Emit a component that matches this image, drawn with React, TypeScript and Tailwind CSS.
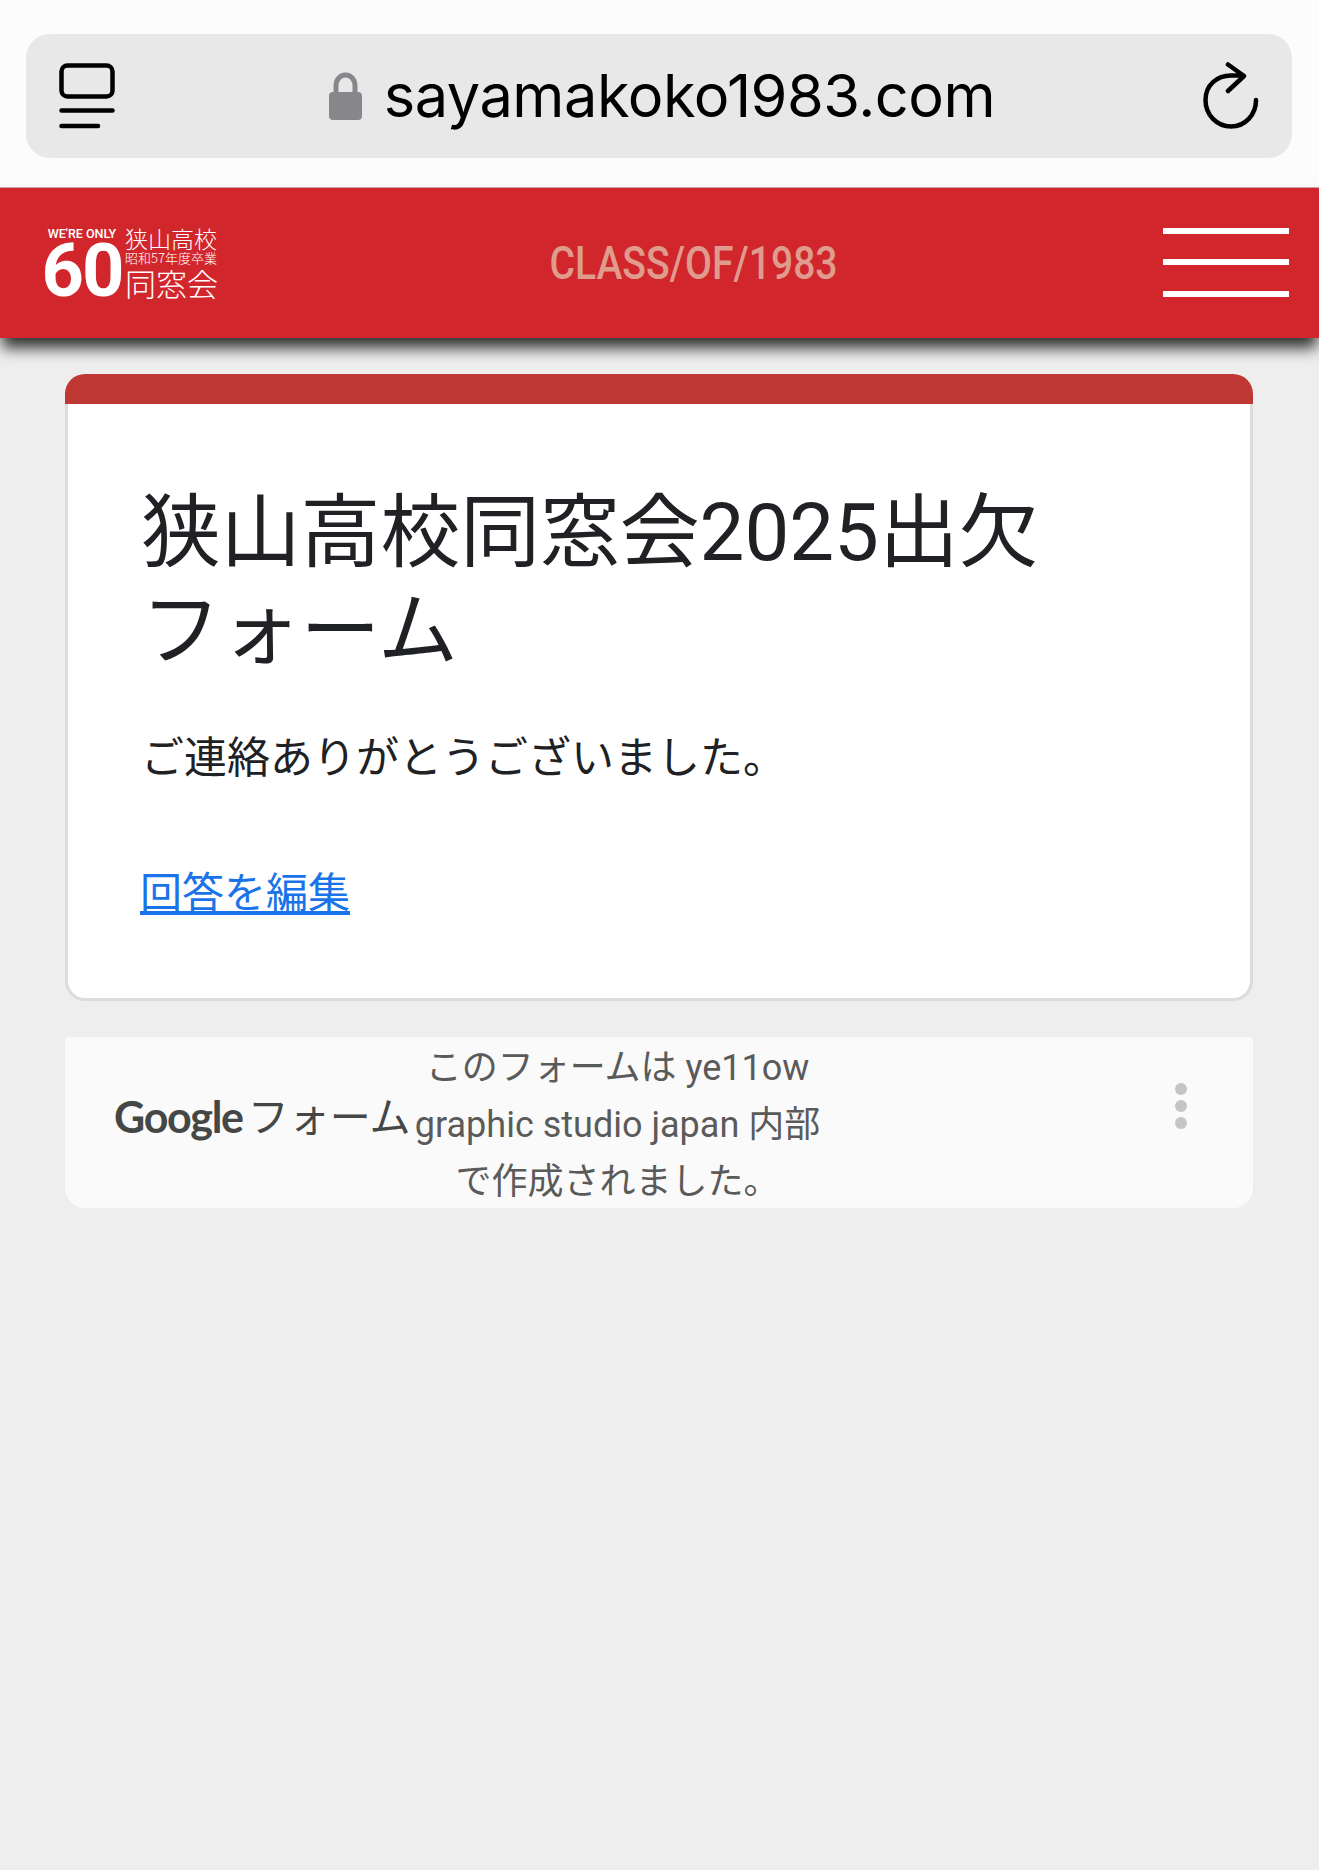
export default function App() {
  const jp = "font-['Roboto','Noto_Sans_CJK_JP',sans-serif]";
  return (
    <div className="h-[1870px] w-full overflow-hidden bg-[#eeeeee]">
      <div className="h-[187px] bg-[#fcfcfc] px-[26px] pt-[34px]">
        <div className="flex h-[124px] w-[1266px] items-center rounded-[24px] bg-[#e8e8e8] pl-[33px] pr-[33px]">
          <svg width="56" height="66" viewBox="0 0 56 66" fill="none" stroke="#000" strokeWidth="4.5" strokeLinecap="round" className="shrink-0">
            <rect x="2.5" y="2.5" width="51" height="31" rx="6" />
            <path d="M2.5 47.5H53.5" />
            <path d="M2.5 63H39" />
          </svg>
          <div className="flex flex-1 items-center justify-center pl-[6px]">
            <svg width="33" height="48" viewBox="0 0 33 48" className="mr-[22px] shrink-0">
              <path d="M7 22V14C7 7.5 11 3 16.5 3S26 7.5 26 14V22" fill="none" stroke="#87878b" strokeWidth="5" />
              <rect x="0" y="20" width="33" height="28" rx="4" fill="#87878b" />
            </svg>
            <span className="font-['Inter',sans-serif] text-[59.5px] leading-none tracking-[-0.5px] text-black">sayamakoko1983.com</span>
          </div>
          <svg width="56" height="68" viewBox="0 0 56 68" fill="none" stroke="#000" strokeWidth="4.5" strokeLinecap="round" strokeLinejoin="round" className="shrink-0">
            <path d="M53 38C53 53 42 64.5 28 64.5S2.5 53 2.5 38 14 13.5 28 13.5H40" />
            <path d="M25 2.5 41 14 25 29" />
          </svg>
        </div>
      </div>

      <header className="relative z-10 flex h-[151px] items-center justify-between border-t border-[#c9a5a5] bg-[#d2262d] shadow-[0_12px_14px_-2px_rgba(0,0,0,0.8)]">
        <div className="ml-[43px] flex h-[72px] w-[176px] text-white">
          <div className="flex w-[78px] flex-col items-center">
            <span className="whitespace-nowrap font-['Roboto',sans-serif] text-[12.5px] font-medium leading-[14px]">WE'RE ONLY</span>
            <span className="mt-[-1px] font-['Roboto',sans-serif] text-[74px] font-bold leading-[62px] tracking-[-2px]">60</span>
          </div>
          <div className="ml-[4px] flex w-[94px] flex-col font-['Noto_Sans_CJK_JP',serif] font-light">
            <span className="whitespace-nowrap text-[23px] leading-[23px]">狭山高校</span>
            <span className="whitespace-nowrap text-[13px] leading-[16px]">昭和57年度卒業</span>
            <span className="mt-[1px] whitespace-nowrap text-[31px] leading-[32px]">同窓会</span>
          </div>
        </div>
        <span className="ml-[6px] origin-center scale-x-[0.85] font-['Roboto',sans-serif] text-[46px] font-medium leading-none text-[#df9c8c]">CLASS/OF/1983</span>
        <div className="mb-[2px] mr-[30px] flex h-[69px] w-[126px] flex-col justify-between">
          <div className="h-[6px] bg-white" />
          <div className="h-[6px] bg-white" />
          <div className="h-[6px] bg-white" />
        </div>
      </header>

      <main className="w-[1253px] pl-[65px] pt-[36px]">
        <div className="h-[30px] rounded-t-[20px] bg-[#bf3834]" />
        <div className="h-[597px] rounded-b-[20px] border-x-[3px] border-b-[3px] border-[#dadce0] bg-white">
          <div className={`pl-[73px] pr-[100px] pt-[80px] ${jp}`}>
            <h1 className="text-[79.8px] font-normal leading-[98px] text-[#202124]">狭山高校同窓会2025出欠<br />フォーム</h1>
            <p className="mt-[48px] text-[43px] leading-[60px] text-[#202124]">ご連絡ありがとうございました。</p>
            <a className="mt-[76px] ml-[-1px] block text-[42px] leading-[60px] text-[#1a73e8] underline">回答を編集</a>
          </div>
        </div>

        <footer className={`mt-[36px] flex h-[171px] items-center rounded-b-[20px] rounded-t-[4px] bg-[#fafafa] pl-[49px] pr-[66px] ${jp}`}>
          <span className="mb-[12px] font-['Lato',sans-serif] text-[43px] font-bold leading-none tracking-[-1.3px] text-[#444746]">Google</span>
          <span className="ml-[5px] mt-[-8px] whitespace-nowrap text-[41px] leading-none text-[#444746]">フォーム</span>
          <p className="ml-[3px] mt-[5px] w-[408px] text-center text-[36px] leading-[57px] text-[#5a5a5a]">
            このフォームは ye11ow<br />graphic studio japan 内部<br />で作成されました。
          </p>
          <div className="ml-auto mb-[34px] flex flex-col gap-[5px]">
            <div className="size-[12px] rounded-full bg-[#c5c5c5]" />
            <div className="size-[12px] rounded-full bg-[#c5c5c5]" />
            <div className="size-[12px] rounded-full bg-[#c5c5c5]" />
          </div>
        </footer>
      </main>
    </div>
  );
}
